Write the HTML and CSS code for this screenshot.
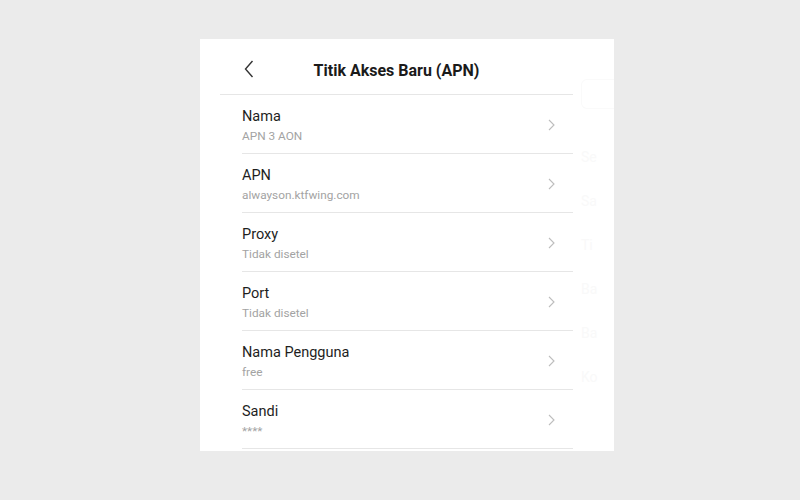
FILE: index.html
```html
<!DOCTYPE html>
<html lang="id">
<head>
    <meta charset="UTF-8">
    <meta name="viewport" content="width=device-width, initial-scale=1.0">
    <title>Titik Akses Baru (APN)</title>
    <link rel="stylesheet" href="styles.css">
</head>
<body>

<div class="panel">
    <div class="screen">
        <!-- HEADER -->
        <div class="header">
            <svg class="back" width="10" height="18" viewBox="0 0 10 18">
                <path d="M8.5 1 L1.5 9 L8.5 17" fill="none" stroke="#333" stroke-width="1.4"/>
            </svg>
            <h2>Titik Akses Baru (APN)</h2>
        </div>

        <!-- SETTINGS LIST -->
        <div class="list">
            <div class="row">
                <div class="text">
                    <div class="label">Nama</div>
                    <div class="value">APN 3 AON</div>
                </div>
                <svg class="arrow" width="7" height="12" viewBox="0 0 7 12"><path d="M1 1 L6 6 L1 11" fill="none" stroke="#bdbdbd" stroke-width="1.1"/></svg>
            </div>
            <div class="row">
                <div class="text">
                    <div class="label">APN</div>
                    <div class="value">alwayson.ktfwing.com</div>
                </div>
                <svg class="arrow" width="7" height="12" viewBox="0 0 7 12"><path d="M1 1 L6 6 L1 11" fill="none" stroke="#bdbdbd" stroke-width="1.1"/></svg>
            </div>
            <div class="row">
                <div class="text">
                    <div class="label">Proxy</div>
                    <div class="value">Tidak disetel</div>
                </div>
                <svg class="arrow" width="7" height="12" viewBox="0 0 7 12"><path d="M1 1 L6 6 L1 11" fill="none" stroke="#bdbdbd" stroke-width="1.1"/></svg>
            </div>
            <div class="row">
                <div class="text">
                    <div class="label">Port</div>
                    <div class="value">Tidak disetel</div>
                </div>
                <svg class="arrow" width="7" height="12" viewBox="0 0 7 12"><path d="M1 1 L6 6 L1 11" fill="none" stroke="#bdbdbd" stroke-width="1.1"/></svg>
            </div>
            <div class="row">
                <div class="text">
                    <div class="label">Nama Pengguna</div>
                    <div class="value">free</div>
                </div>
                <svg class="arrow" width="7" height="12" viewBox="0 0 7 12"><path d="M1 1 L6 6 L1 11" fill="none" stroke="#bdbdbd" stroke-width="1.1"/></svg>
            </div>
            <div class="row">
                <div class="text">
                    <div class="label">Sandi</div>
                    <div class="value">****</div>
                </div>
                <svg class="arrow" width="7" height="12" viewBox="0 0 7 12"><path d="M1 1 L6 6 L1 11" fill="none" stroke="#bdbdbd" stroke-width="1.1"/></svg>
            </div>
        </div>
    </div>

    <!-- faded screen behind -->
    <div class="ghost">
        <div class="ghost-box"></div>
        <div class="ghost-item">Se</div>
        <div class="ghost-item">Sa</div>
        <div class="ghost-item">Ti</div>
        <div class="ghost-item">Ba</div>
        <div class="ghost-item">Ba</div>
        <div class="ghost-item">Ko</div>
    </div>
</div>

</body>
</html>
```

FILE: styles.css
```css
body {
    margin: 0;
    background-color: #ebebeb;
    font-family: Roboto, "Liberation Sans", Arial, sans-serif;
    padding: 39px 0 0 200px;
}
.panel {
    width: 414px;
    height: 412px;
    background: white;
    display: flex;
    overflow: hidden;
}
.screen {
    width: 353px;
    padding-left: 20px;
}
.header {
    height: 55px;
    border-bottom: 1px solid #e6e6e6;
    display: flex;
    align-items: center;
    justify-content: center;
    position: relative;
}
.back {
    position: absolute;
    left: 24px;
    top: 21px;
}
h2 {
    margin: 0;
    font-size: 16px;
    font-weight: bold;
    color: #1a1a1a;
    padding-top: 7px;
}
.list {
    margin-left: 22px;
}
.row {
    height: 58px;
    border-bottom: 1px solid #e6e6e6;
    display: flex;
    align-items: center;
    justify-content: space-between;
}
.text {
    padding-top: 3px;
}
.label {
    font-size: 14.5px;
    line-height: 17px;
    color: #1e1e1e;
}
.value {
    font-size: 11.8px;
    line-height: 14px;
    margin-top: 4px;
    color: #a3a3a3;
}
.arrow {
    margin-right: 18px;
    margin-top: 2px;
}
.ghost {
    flex: 1;
    padding: 40px 0 0 8px;
}
.ghost-box {
    height: 28px;
    border: 1px solid #fafafa;
    border-right: none;
    border-radius: 6px 0 0 6px;
    margin-bottom: 40px;
}
.ghost-item {
    font-size: 14px;
    color: #f9f9f9;
    height: 44px;
}
```
